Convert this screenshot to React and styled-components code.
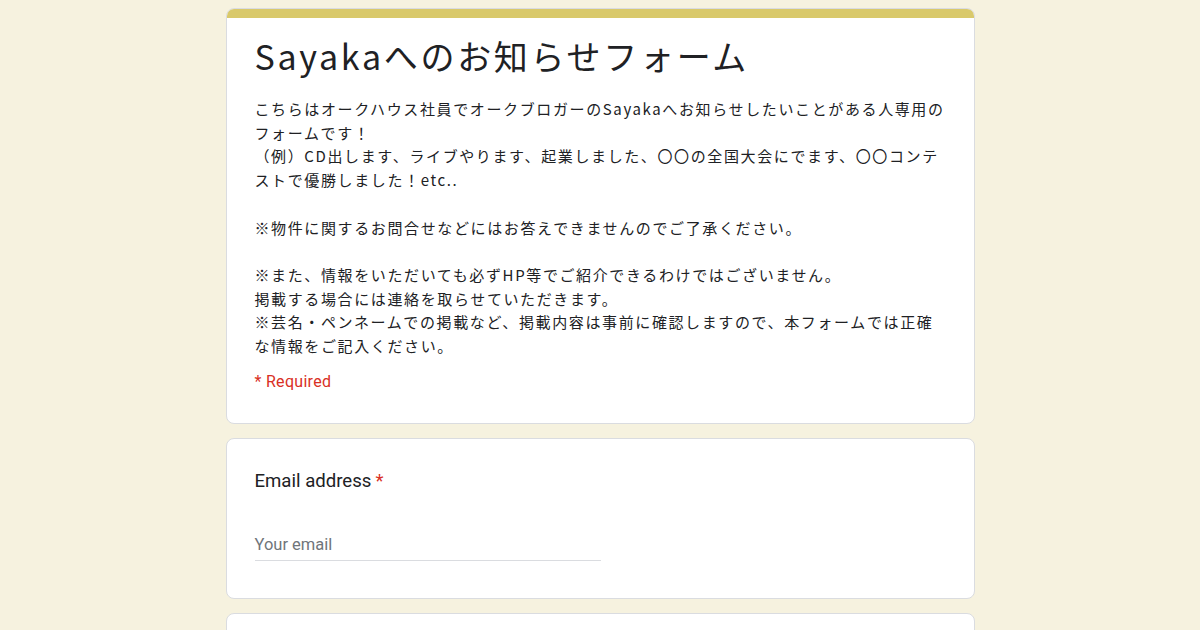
import React from "react";
import styled, { createGlobalStyle } from "styled-components";

const Global = createGlobalStyle`
  html, body { margin: 0; padding: 0; background: #f6f2df; }
  body { font-family: "Noto Sans CJK JP", "Noto Sans", Roboto, sans-serif; color: #202124; }
  * { box-sizing: border-box; }
`;

const Page = styled.div`
  width: 1200px;
  height: 630px;
  overflow: hidden;
  background: #f6f2df;
  display: flex;
  flex-direction: column;
  align-items: center;
  padding-top: 8px;
  gap: 14px;
`;

const Card = styled.div`
  width: 749px;
  background: #fff;
  border: 1px solid #dadce0;
  border-radius: 8px;
  overflow: hidden;
  flex-shrink: 0;
`;

const TopBar = styled.div`
  height: 10px;
  background: #d9c96b;
  margin: -1px -1px 0;
`;

const HeaderBody = styled.div`
  padding: 16px 24px 32px 28px;
`;

const Title = styled.h1`
  margin: 0;
  font-family: "Noto Sans CJK JP", sans-serif;
  font-weight: 400;
  font-size: 34px;
  line-height: 44px;
  letter-spacing: 2.7px;
  color: #202124;
`;

const Description = styled.div`
  margin-top: 19px;
  font-family: "Noto Sans CJK JP", sans-serif;
  font-size: 15px;
  line-height: 23.7px;
  letter-spacing: 1.62px;
  color: #202124;
  white-space: pre-wrap;
`;

const Required = styled.div`
  margin-top: 14px;
  font-family: Roboto, "Noto Sans", sans-serif;
  font-size: 16px;
  letter-spacing: 0.3px;
  color: #d93025;
`;

const QuestionBody = styled.div`
  padding: 30px 24px 37px 28px;
`;

const Label = styled.div`
  font-family: Roboto, "Noto Sans", sans-serif;
  font-size: 18.6px;
  line-height: 24px;
  color: #202124;
`;

const Star = styled.span`
  color: #d93025;
  margin-left: 4px;
`;

const Input = styled.div`
  margin-top: 40px;
  width: 346px;
  border-bottom: 1px solid #dadce0;
  padding-bottom: 3px;
  font-family: Roboto, "Noto Sans", sans-serif;
  font-size: 16.5px;
  line-height: 24px;
  color: #70757a;
`;

const desc = `こちらはオークハウス社員でオークブロガーのSayakaへお知らせしたいことがある人専用のフォームです！
（例）CD出します、ライブやります、起業しました、〇〇の全国大会にでます、〇〇コンテストで優勝しました！etc..

※物件に関するお問合せなどにはお答えできませんのでご了承ください。

※また、情報をいただいても必ずHP等でご紹介できるわけではございません。
掲載する場合には連絡を取らせていただきます。
※芸名・ペンネームでの掲載など、掲載内容は事前に確認しますので、本フォームでは正確な情報をご記入ください。`;

export default function App() {
  return (
    <>
      <Global />
      <Page>
        <Card>
          <TopBar />
          <HeaderBody>
            <Title>Sayakaへのお知らせフォーム</Title>
            <Description>{desc}</Description>
            <Required>* Required</Required>
          </HeaderBody>
        </Card>
        <Card>
          <QuestionBody>
            <Label>
              Email address<Star>*</Star>
            </Label>
            <Input>Your email</Input>
          </QuestionBody>
        </Card>
        <Card>
          <QuestionBody />
        </Card>
      </Page>
    </>
  );
}
